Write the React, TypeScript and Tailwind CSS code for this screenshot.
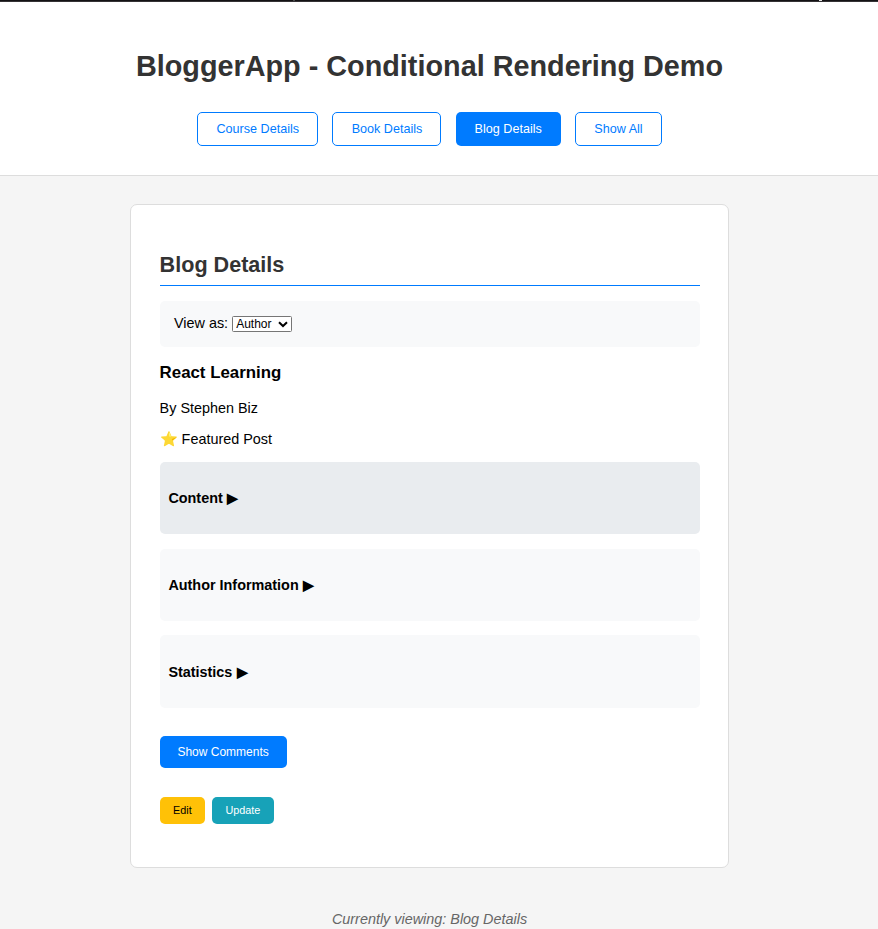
const outline =
  "h-[34px] rounded-[5px] border border-[#007bff] bg-white text-[12.6px] text-[#007bff]";

function Section({ title, className }: { title: string; className: string }) {
  return (
    <div className={`flex items-center rounded-[5px] pl-[8.8px] pt-[2px] text-[14.4px] font-bold ${className}`}>
      {title}
      <span className="ml-[4.6px]">▶</span>
    </div>
  );
}

export default function App() {
  return (
    <div className="flex h-[929px] w-full flex-col overflow-hidden bg-[#f5f5f5] font-['Liberation_Sans',Arial,sans-serif] text-black">
      <div className="flex h-[2px] shrink-0 border-b border-[#353235] bg-[#131214]">
        <span className="ml-[293px] h-px w-[2px] bg-[#4a4a4a]" />
        <span className="ml-[524px] h-px w-[3px] bg-[#e5e5e5]" />
      </div>
      <header className="h-[174px] shrink-0 border-b border-[#ddd] bg-white pr-[19px] pt-[46px]">
        <h1 className="text-center text-[28.8px] font-bold leading-[36px] text-[#333]">
          BloggerApp - Conditional Rendering Demo
        </h1>
        <nav className="mt-[28px] flex justify-center gap-[14px]">
          <button className={`w-[121px] pl-[0.6px] ${outline}`}>Course Details</button>
          <button className={`w-[109px] pl-[1px] ${outline}`}>Book Details</button>
          <button className="ml-px h-[34px] w-[105px] rounded-[5px] bg-[#007bff] pr-[0.6px] text-[12.6px] text-white">
            Blog Details
          </button>
          <button className={`w-[87px] ${outline}`}>Show All</button>
        </nav>
      </header>
      <main className="ml-[130px] mt-[28px] h-[664px] w-[599px] shrink-0 rounded-[7px] border border-[#ddd] bg-white pl-[28.6px] pr-[28.4px] pt-[46px]">
        <h2 className="h-[35px] border-b border-[#007bff] text-[21.6px] font-bold leading-[27px] text-[#333]">
          Blog Details
        </h2>
        <div className="mt-[15px] flex h-[46px] items-start rounded-[5px] bg-[#f8f9fa] pl-[14.4px] pt-[13px] text-[14.4px] leading-[18px]">
          <label htmlFor="role">View as:</label>
          <div className="relative ml-[4px] mt-[2px] h-[16px] w-[60px]">
            <select
              id="role"
              className="block h-[16px] w-[60px] appearance-none rounded-[1.5px] border border-[#767676] bg-white pl-[3px] pt-px text-[12px] leading-[13px]"
            >
              <option>Author</option>
              <option>Reader</option>
            </select>
            <svg
              className="pointer-events-none absolute right-[4px] top-[4.6px] h-[7px] w-[10px]"
              viewBox="0 0 10 7"
              fill="none"
              stroke="black"
              strokeWidth="2"
            >
              <path d="M1 1.2 L5 5 L9 1.2" />
            </svg>
          </div>
        </div>
        <h3 className="mt-[16px] text-[16.85px] font-bold leading-[20px]">React Learning</h3>
        <p className="mt-[16px] text-[14.4px] leading-[18px]">By Stephen Biz</p>
        <p className="mt-[13px] text-[14.4px] leading-[18px]">⭐ Featured Post</p>
        <Section title="Content" className="mt-[14px] h-[72px] bg-[#e9ecef]" />
        <Section title="Author Information" className="mt-[15px] h-[72px] bg-[#f8f9fa]" />
        <Section title="Statistics" className="mt-[14px] h-[73px] bg-[#f8f9fa]" />
        <button className="mt-[28px] block h-[32px] w-[127px] rounded-[5px] bg-[#007bff] text-[12px] text-white">
          Show Comments
        </button>
        <div className="mt-[29px] flex gap-[7px] text-[10.8px]">
          <button className="h-[27px] w-[45px] rounded-[5px] bg-[#ffc107] pl-[0.6px]">Edit</button>
          <button className="h-[27px] w-[62px] rounded-[5px] bg-[#17a2b8] pl-[0.6px] text-white">Update</button>
        </div>
      </main>
      <p className="mt-[42px] pr-[19px] text-center text-[14.4px] italic leading-[18px] text-[#666]">
        Currently viewing: Blog Details
      </p>
    </div>
  );
}
